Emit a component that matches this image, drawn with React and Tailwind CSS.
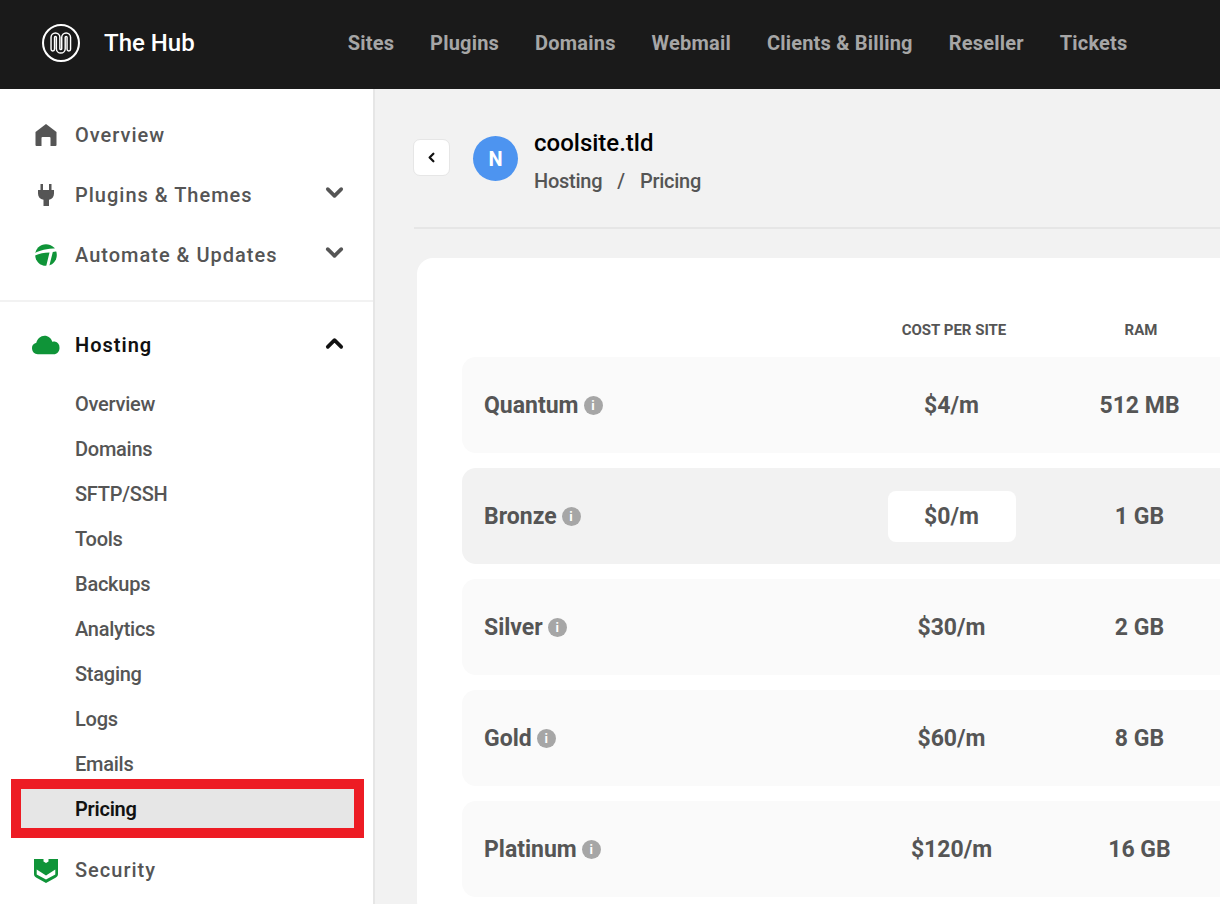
import { ChevronDown, ChevronUp, ChevronLeft } from 'lucide-react';

const topLinks = ['Sites', 'Plugins', 'Domains', 'Webmail', 'Clients & Billing', 'Reseller', 'Tickets'];
const hostingLinks = ['Overview', 'Domains', 'SFTP/SSH', 'Tools', 'Backups', 'Analytics', 'Staging', 'Logs', 'Emails'];
const plans = [
  { name: 'Quantum', cost: '$4/m', ram: '512 MB' },
  { name: 'Bronze', cost: '$0/m', ram: '1 GB', current: true },
  { name: 'Silver', cost: '$30/m', ram: '2 GB' },
  { name: 'Gold', cost: '$60/m', ram: '8 GB' },
  { name: 'Platinum', cost: '$120/m', ram: '16 GB' },
];

const wave = 'M10.500 25V13.500a2.600 2.600 0 0 1 5.200 0v11a2.600 2.600 0 0 0 5.200 0v-11a2.600 2.600 0 0 1 5.200 0V25';

const Logo = () => (
  <svg width="38" height="38" viewBox="0 0 37 37" fill="none" stroke="white">
    <circle cx="18.500" cy="18.500" r="17.500" strokeWidth="2" />
    <path d={wave} transform="translate(0 -0.500)" strokeWidth="4.800" strokeLinecap="round" />
    <path d={wave} transform="translate(0 -0.500)" stroke="#1a1a1a" strokeWidth="2" strokeLinecap="round" />
  </svg>
);

const HomeIcon = () => (
  <svg width="22" height="24" viewBox="0 0 22 24" fill="#555555">
    <path d="M11 1l10.500 8V22a1 1 0 0 1-1 1H15.500V15a1 1 0 0 0-1-1h-7a1 1 0 0 0-1 1v8H1.500a1 1 0 0 1-1-1V9z" />
  </svg>
);

const PlugIcon = () => (
  <svg width="16" height="24" viewBox="0 0 16 24" fill="#555555">
    <path d="M2.500 1h2.500v6H11V1h2.500v6H16v3.500c0 3.500-2 5.500-5 6.200V23H5.500v-6.300C2 16 0 14 0 10.500V7h2.500z" />
  </svg>
);

const AutomateIcon = () => (
  <svg width="22" height="22" viewBox="0 0 22 22">
    <circle cx="11" cy="11" r="10.800" fill="#0f9438" />
    <path d="M-1 9.500C4 6.500 11 4.500 23 4.500V7L17.800 8 14 23H11L14.500 8.500C8.500 8.500 4 9.500-1 12z" fill="white" />
  </svg>
);

const CloudIcon = () => (
  <svg width="30" height="20" viewBox="0 0 30 20" fill="#0f9438">
    <path d="M7 19.500a6 6 0 0 1-1.500-11.800C6.500 3.500 10 .5 14 .5c3.800 0 7 2.600 8 6.200a5 5 0 0 1 2.500-.2 6.500 6.500 0 0 1 5 6.500c0 3.600-2.600 6.500-6 6.500z" />
  </svg>
);

const ShieldIcon = () => (
  <svg width="26" height="25" viewBox="0 0 26 25">
    <path d="M1 1h9.500v2.500L13 5l2.500-1.500V1H25V16c0 2-1 3-2.500 3.700L13 25 3.500 19.700C2 19 1 18 1 16z" fill="#0f9438" />
    <path d="M3.700 11.500L13 17.500l9.300-6v5L13 21.500l-9.300-5z" fill="white" />
  </svg>
);

const InfoDot = () => (
  <span className="flex h-[19px] w-[19px] items-center justify-center rounded-full bg-[#a6a6a6] text-[13px] font-bold leading-none text-white">
    i
  </span>
);

const MainItem = ({ icon, label, open, active }) => (
  <div className={`flex h-[60px] items-center pl-[31px] pr-[25px] ${active ? 'text-[#111111]' : 'text-[#555555]'}`}>
    <span className="flex w-[29px] justify-center">{icon}</span>
    <span className={`ml-[15px] flex-1 text-[20px] tracking-[1px] ${active ? 'font-semibold' : 'font-medium'}`}>{label}</span>
    {open === true && <ChevronUp size={27} strokeWidth={3.2} color="#111111" className="-mt-[3px]" />}
    {open === false && <ChevronDown size={27} strokeWidth={3.2} color="#555555" className="-mt-[5px]" />}
  </div>
);

const App = () => {
  return (
    <div className="flex h-[904px] w-[1220px] flex-col overflow-hidden bg-[#f2f2f2] font-['Roboto',sans-serif]">
      <header className="flex h-[89px] shrink-0 items-center bg-[#1a1a1a] pb-[4px]">
        <div className="ml-[42px] flex items-center">
          <Logo />
          <span className="ml-[24px] text-[24px] font-medium text-white">The Hub</span>
        </div>
        <nav className="ml-[153px] flex gap-[36px] text-[20px] font-bold tracking-[0.2px] text-[#a6a6a6]">
          {topLinks.map((link) => (
            <span key={link}>{link}</span>
          ))}
        </nav>
      </header>

      <div className="flex min-h-0 flex-1">
        <aside className="w-[375px] shrink-0 overflow-hidden border-r-2 border-[#e6e6e6] bg-white pt-[16px]">
          <MainItem icon={<HomeIcon />} label="Overview" />
          <MainItem icon={<PlugIcon />} label="Plugins & Themes" open={false} />
          <MainItem icon={<AutomateIcon />} label="Automate & Updates" open={false} />
          <div className="mt-[15px] border-t-2 border-[#f2f2f2] pt-[13px]">
            <MainItem icon={<CloudIcon />} label="Hosting" open active />
          </div>
          <div className="mt-[6px]">
            {hostingLinks.map((link) => (
              <div key={link} className="flex h-[45px] items-center pl-[75px] text-[20px] font-medium tracking-[-0.25px] text-[#555555]">
                {link}
              </div>
            ))}
            <div className="relative flex h-[45px] items-center pl-[75px] text-[20px] font-semibold tracking-[-0.25px] text-[#111111]">
              <div className="absolute -top-[7px] -bottom-[7px] left-[11px] right-[9px] border-10 border-[#ed1c24] bg-[#e6e6e6]" />
              <span className="relative">Pricing</span>
            </div>
          </div>
          <div className="mt-[9px]">
            <MainItem icon={<ShieldIcon />} label="Security" />
          </div>
        </aside>

        <main className="min-w-0 flex-1 overflow-hidden pl-[39px]">
          <div className="flex h-[140px] items-start border-b-2 border-[#e6e6e6]">
            <button className="-ml-[1px] mt-[50px] flex h-[37px] w-[37px] items-center justify-center rounded-[7px] border border-[#e6e6e6] bg-white">
              <ChevronLeft size={15} strokeWidth={3.6} color="#111111" />
            </button>
            <div className="ml-[23px] mt-[47px] flex h-[45px] w-[45px] items-center justify-center rounded-full bg-[#4d94f0] text-[20px] font-bold text-white">
              N
            </div>
            <div className="ml-[16px] mt-[37px]">
              <div className="text-[24px] font-medium leading-[34px] text-black">coolsite.tld</div>
              <div className="mt-[6px] flex text-[20px] font-medium leading-[30px] tracking-[-0.25px] text-[#555555]">
                <span>Hosting</span>
                <span className="mx-[15px]">/</span>
                <span>Pricing</span>
              </div>
            </div>
          </div>

          <section className="ml-[3px] mt-[29px] w-[900px] rounded-l-[16px] bg-white pl-[45px]">
            <div className="grid h-[99px] grid-cols-[396px_187px_187px] items-end pb-[17px] text-[15px] font-bold uppercase leading-[20px] text-[#555555]">
              <span />
              <span className="pl-[5px] text-center">Cost per site</span>
              <span className="pl-[5px] text-center">RAM</span>
            </div>
            <div className="flex flex-col gap-[15px] pb-[20px]">
              {plans.map((plan) => (
                <div
                  key={plan.name}
                  className={`grid h-[96px] grid-cols-[396px_187px_187px] items-center rounded-l-[14px] text-[23px] font-bold text-[#555555] ${plan.current ? 'bg-[#f2f2f2]' : 'bg-[#fafafa]'}`}
                >
                  <div className="flex items-center gap-[5px] pl-[22px]">
                    <span className="pt-[2px]">{plan.name}</span>
                    <InfoDot />
                  </div>
                  <div className="flex justify-center">
                    <span className={`flex h-[51px] w-[128px] items-center justify-center rounded-[8px] pt-[2px] ${plan.current ? 'bg-white' : ''}`}>
                      {plan.cost}
                    </span>
                  </div>
                  <div className="pl-[2px] pt-[2px] text-center">{plan.ram}</div>
                </div>
              ))}
            </div>
          </section>
        </main>
      </div>
    </div>
  );
};

export default App;
